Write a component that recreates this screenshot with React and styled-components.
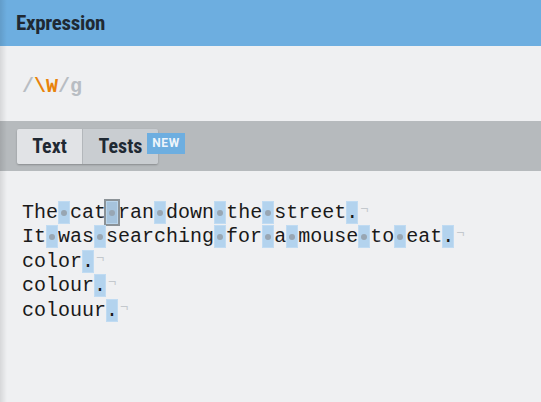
import React from 'react';
import styled, { createGlobalStyle } from 'styled-components';

const GlobalStyle = createGlobalStyle`
  html, body {
    margin: 0;
    padding: 0;
    background: #eff0f2;
  }
  body {
    font-family: Roboto, "Liberation Sans", sans-serif;
  }
`;

const Page = styled.div`
  position: relative;
  width: 541px;
  height: 402px;
  overflow: hidden;
  background: #eff0f2;

  &::after {
    content: '';
    position: absolute;
    left: 0;
    top: 0;
    bottom: 0;
    width: 7px;
    background: linear-gradient(to right, rgba(0, 0, 0, 0.1), rgba(0, 0, 0, 0));
    pointer-events: none;
  }
`;

const Header = styled.header`
  height: 46px;
  background: #6daee0;
  display: flex;
  align-items: center;
  padding-left: 16px;
  font-family: Roboto, sans-serif;
  font-weight: 700;
  font-size: 21px;
  font-stretch: 78%;
  letter-spacing: -0.3px;
  color: #1f2933;
`;

const ExprArea = styled.div`
  height: 75px;
  box-sizing: border-box;
  padding: 6px 0 0 22px;
  display: flex;
  align-items: center;
  font-family: "Liberation Mono", "DejaVu Sans Mono", monospace;
  font-weight: 700;
  font-size: 20px;
`;

const Tok = styled.span`
  color: ${(p) => (p.$accent ? '#e8830c' : '#b8bdc3')};
`;

const TabBar = styled.div`
  height: 50px;
  background: #b6babd;
  display: flex;
  align-items: center;
  padding-left: 17px;
`;

const Tabs = styled.div`
  position: relative;
  display: flex;
  height: 35px;
  border-radius: 2px;
  box-shadow: 0 1px 2px rgba(0, 0, 0, 0.25);
`;

const Tab = styled.div`
  width: ${(p) => p.$w}px;
  display: flex;
  align-items: center;
  justify-content: center;
  background: ${(p) => (p.$active ? '#e1e3e6' : '#c9cdd1')};
  border-left: ${(p) => (p.$active ? 'none' : '1px solid #b3b7bb')};
  border-radius: ${(p) => (p.$active ? '2px 0 0 2px' : '0 2px 2px 0')};
  font-family: Roboto, sans-serif;
  font-weight: 700;
  font-size: 20px;
  font-stretch: 80%;
  color: #1f2933;
`;

const Badge = styled.span`
  position: absolute;
  left: 130px;
  top: 4px;
  width: 38px;
  height: 21px;
  background: #6daee0;
  color: #eef5fb;
  font-family: Roboto, sans-serif;
  font-weight: 700;
  font-size: 12px;
  letter-spacing: 0.6px;
  display: flex;
  align-items: center;
  justify-content: center;
`;

const Editor = styled.div`
  padding: 27px 0 0 22px;
  font-family: "Liberation Mono", "DejaVu Sans Mono", monospace;
  font-size: 20px;
  line-height: 24.4px;
  color: #1a1a1a;
`;

const Line = styled.div`
  white-space: pre;
  height: 24.4px;
`;

const Match = styled.span`
  position: relative;
  background: #b3d3ee;
  box-shadow: inset 0 0 0 1px rgba(200, 225, 245, 0.6);
  ${(p) =>
    p.$hover &&
    `
    background: #a6c3dc;
    outline: 2px solid #8b9297;
    outline-offset: 0;
  `}

  &::after {
    content: '';
    display: ${(p) => (p.$space ? 'block' : 'none')};
    position: absolute;
    left: 50%;
    top: 50%;
    width: 6px;
    height: 6px;
    margin: -3px 0 0 -3px;
    border-radius: 50%;
    background: #98a6b3;
  }
`;

const Eol = styled.span`
  color: #c3c8cd;
  font-size: 14px;
  vertical-align: 4px;
  margin-left: 2px;
`;

const lines = [
  'The cat ran down the street.',
  'It was searching for a mouse to eat.',
  'color.',
  'colour.',
  'colouur.',
];

function renderLine(text, li) {
  const parts = [];
  let buf = '';
  let mi = 0;
  for (let i = 0; i < text.length; i++) {
    const ch = text[i];
    if (/\W/.test(ch)) {
      if (buf) parts.push(buf);
      buf = '';
      const hover = li === 0 && mi === 1;
      parts.push(
        <Match key={i} $space={ch === ' '} $hover={hover}>
          {ch}
        </Match>
      );
      mi++;
    } else {
      buf += ch;
    }
  }
  if (buf) parts.push(buf);
  return parts;
}

export default function App() {
  return (
    <Page>
      <GlobalStyle />
      <Header>Expression</Header>
      <ExprArea>
        <Tok>/</Tok>
        <Tok $accent>\W</Tok>
        <Tok>/g</Tok>
      </ExprArea>
      <TabBar>
        <Tabs>
          <Tab $active $w={65}>Text</Tab>
          <Tab $w={75}>Tests</Tab>
          <Badge>NEW</Badge>
        </Tabs>
      </TabBar>
      <Editor>
        {lines.map((l, i) => (
          <Line key={i}>
            {renderLine(l, i)}
            <Eol>¬</Eol>
          </Line>
        ))}
      </Editor>
    </Page>
  );
}
